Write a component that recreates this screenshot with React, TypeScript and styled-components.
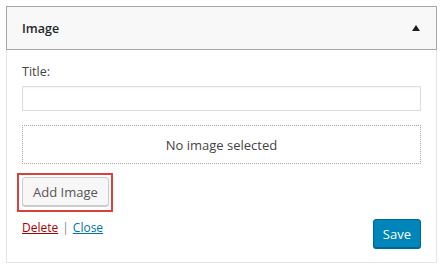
import * as React from 'react';
import styled, { createGlobalStyle } from 'styled-components';

const GlobalStyle = createGlobalStyle`
    html, body {
        margin: 0;
        padding: 0;
        background: #ffffff;
    }
    body {
        width: 440px;
        height: 267px;
        overflow: hidden;
        font-family: "Open Sans", "Noto Sans", sans-serif;
        color: #444;
    }
`;

const Panel = styled.div`
    margin: 6px 3px 0 6px;
    width: 431px;
    box-sizing: border-box;
`;

const Header = styled.div`
    display: flex;
    align-items: center;
    justify-content: space-between;
    height: 44px;
    box-sizing: border-box;
    padding: 0 16px 0 15px;
    background: #f8f8f8;
    border: 1px solid #a5a5a5;
`;

const HeaderTitle = styled.h3`
    margin: 0;
    font-size: 12.5px;
    font-weight: 600;
    color: #23282d;
`;

const Toggle = styled.span`
    width: 0;
    height: 0;
    border-left: 4px solid transparent;
    border-right: 4px solid transparent;
    border-bottom: 6px solid #1e1e1e;
`;

const Body = styled.div`
    display: flex;
    flex-direction: column;
    padding: 13px 15px 14px;
    border: 1px solid #e5e5e5;
    border-top: none;
`;

const Label = styled.label`
    font-size: 12.5px;
    line-height: 18px;
    margin-bottom: 5px;
    color: #444;
`;

const TextInput = styled.input`
    height: 25px;
    box-sizing: border-box;
    border: 1px solid #dddddd;
    box-shadow: inset 0 1px 2px rgba(0, 0, 0, 0.04);
    margin: 0 0 14px;
    padding: 0 6px;
    outline: 0;
`;

const ImageBox = styled.div`
    display: flex;
    align-items: center;
    justify-content: center;
    height: 39px;
    box-sizing: border-box;
    border: 1px dotted #a8a8a8;
    font-size: 13px;
    color: #444;
    margin-bottom: 9px;
`;

const Highlight = styled.div`
    align-self: flex-start;
    border: 2px solid #d9413f;
    padding: 2px 2px 4px 3px;
    margin-left: -5px;
    margin-bottom: 7px;
`;

const Button = styled.button`
    display: block;
    height: 29px;
    box-sizing: border-box;
    padding: 0 10px;
    font-family: inherit;
    font-size: 13px;
    color: #555;
    background: #f7f7f7;
    border: 1px solid #cccccc;
    border-radius: 3px;
    box-shadow: 0 1px 0 #cccccc;
    cursor: pointer;
`;

const Footer = styled.div`
    display: flex;
    justify-content: space-between;
    align-items: flex-start;
`;

const Links = styled.div`
    display: flex;
    gap: 4px;
    font-size: 12px;
    line-height: 18px;
    color: #888;
`;

const Link = styled.a<{ $danger?: boolean }>`
    color: ${({ $danger }) => ($danger ? '#a00' : '#0073aa')};
    text-decoration: underline;
    cursor: pointer;
`;

const SaveButton = styled.button`
    height: 29px;
    padding: 0 9px;
    font-family: inherit;
    font-size: 13px;
    color: #ffffff;
    background: #0085ba;
    border: 1px solid #006799;
    border-radius: 3px;
    box-shadow: 0 1px 0 #006799;
    cursor: pointer;
`;

export default function App() {
    return (
        <>
            <GlobalStyle />
            <Panel>
                <Header>
                    <HeaderTitle>Image</HeaderTitle>
                    <Toggle />
                </Header>
                <Body>
                    <Label>Title:</Label>
                    <TextInput type="text" />
                    <ImageBox>No image selected</ImageBox>
                    <Highlight>
                        <Button>Add Image</Button>
                    </Highlight>
                    <Footer>
                        <Links>
                            <Link $danger>Delete</Link>
                            <span>|</span>
                            <Link>Close</Link>
                        </Links>
                        <SaveButton>Save</SaveButton>
                    </Footer>
                </Body>
            </Panel>
        </>
    );
}
